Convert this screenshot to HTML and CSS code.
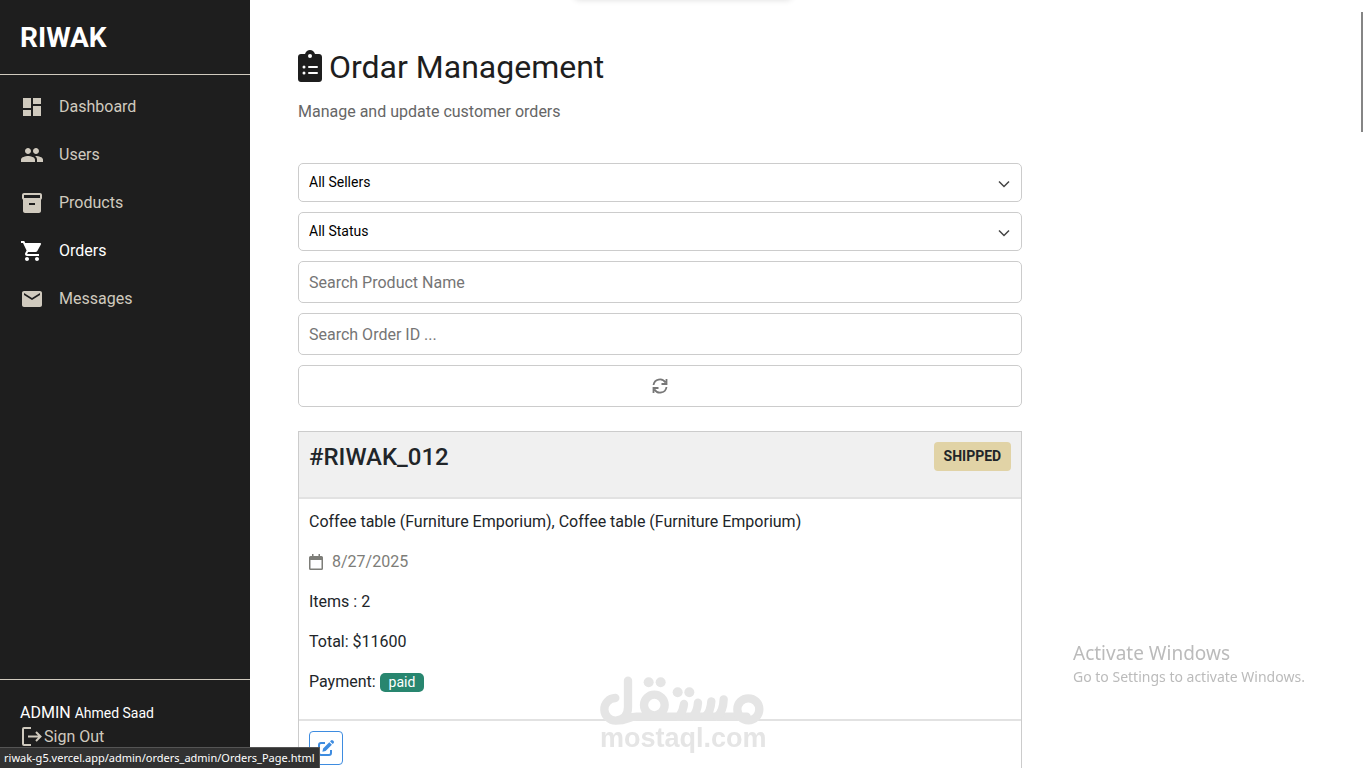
FILE: index.html
```html
<!DOCTYPE html>
<html lang="en">
<head>
<meta charset="utf-8">
<meta name="viewport" content="width=device-width, initial-scale=1">
<title>Riwak Admin</title>
<link rel="stylesheet" href="styles.css">
</head>
<body>
<div class="app">
  <aside class="sidebar">
    <div class="brand">RIWAK</div>
    <nav class="nav">
      <a class="nav-link" href="#dashboard"><svg class="nav-icon" viewBox="0 0 24 24"><path d="M3 13h8V3H3v10zm0 8h8v-6H3v6zm10 0h8V11h-8v10zm0-18v6h8V3h-8z"/></svg>Dashboard</a>
      <a class="nav-link" href="#users"><svg class="nav-icon" viewBox="0 0 24 24"><path d="M16 11c1.66 0 2.99-1.34 2.99-3S17.66 5 16 5s-3 1.34-3 3 1.34 3 3 3zm-8 0c1.66 0 2.99-1.34 2.99-3S9.66 5 8 5 5 6.340 5 8s1.340 3 3 3zm0 2c-2.330 0-7 1.170-7 3.500V19h14v-2.500c0-2.330-4.670-3.500-7-3.500zm8 0c-.29 0-.62.02-.97.05 1.160.840 1.970 1.970 1.970 3.450V19h6v-2.500c0-2.330-4.670-3.500-7-3.500z"/></svg>Users</a>
      <a class="nav-link" href="#products"><svg class="nav-icon" viewBox="0 0 24 24"><path d="M20 2H4c-1 0-2 .9-2 2v3.010c0 .72.43 1.340 1 1.690V20c0 1.100 1.100 2 2 2h14c.9 0 2-.9 2-2V8.700c.57-.35 1-.97 1-1.690V4c0-1.100-1-2-2-2zm-5 12H9v-2h6v2zm5-7H4V4h16v3z"/></svg>Products</a>
      <a class="nav-link active" href="#orders"><svg class="nav-icon" viewBox="0 0 24 24"><path d="M7 18c-1.100 0-1.990.9-1.990 2S5.900 22 7 22s2-.9 2-2-.9-2-2-2zM1 2v2h2l3.600 7.590-1.350 2.450c-.16.28-.25.61-.25.96 0 1.100.9 2 2 2h12v-2H7.420c-.14 0-.25-.11-.25-.25l.03-.12.9-1.630h7.450c.75 0 1.410-.41 1.750-1.030l3.580-6.490A1 1 0 0 0 20 4H5.210l-.94-2H1zm16 16c-1.100 0-1.990.9-1.990 2s.89 2 1.990 2 2-.9 2-2-.9-2-2-2z"/></svg>Orders</a>
      <a class="nav-link" href="#messages"><svg class="nav-icon" viewBox="0 0 24 24"><path d="M20 4H4c-1.100 0-1.990.9-1.990 2L2 18c0 1.100.9 2 2 2h16c1.100 0 2-.9 2-2V6c0-1.100-.9-2-2-2zm0 4l-8 5-8-5V6l8 5 8-5v2z"/></svg>Messages</a>
    </nav>
    <div class="account">
      <div class="account-name">ADMIN <small>Ahmed Saad</small></div>
      <a class="signout" href="#signout"><svg class="nav-icon line" viewBox="0 0 24 24"><path d="M11 3H4a1 1 0 0 0-1 1v15a1 1 0 0 0 1 1h7M8 11.500h12M16 7l4.500 4.500L16 16"/></svg>Sign Out</a>
    </div>
  </aside>

  <main class="main">
    <div class="content">
      <header class="page-head">
        <h1><svg class="title-icon" viewBox="0 0 384 512"><path fill-rule="evenodd" d="M336 64h-64c-14-38-44-64-80-64s-66 26-80 64H48C21 64 0 85 0 112v352c0 27 21 48 48 48h288c27 0 48-21 48-48V112c0-27-21-48-48-48zM192 64a32 32 0 1 1 0 64 32 32 0 0 1 0-64zM96 248a24 24 0 1 1 0 48 24 24 0 0 1 0-48zM96 344a24 24 0 1 1 0 48 24 24 0 0 1 0-48zM176 256h128q16 0 16 16t-16 16H176q-16 0-16-16t16-16zM176 352h128q16 0 16 16t-16 16H176q-16 0-16-16t16-16z"/></svg>Ordar Management</h1>
        <p>Manage and update customer orders</p>
      </header>

      <form class="filters">
        <div class="select-box">
          <select class="field" aria-label="Seller"><option>All Sellers</option></select>
          <svg class="chevron" viewBox="0 0 12 12"><path d="M1 3.500l5 5 5-5"/></svg>
        </div>
        <div class="select-box">
          <select class="field" aria-label="Status"><option>All Status</option></select>
          <svg class="chevron" viewBox="0 0 12 12"><path d="M1 3.500l5 5 5-5"/></svg>
        </div>
        <input class="field" type="text" aria-label="Product name" placeholder="Search Product Name">
        <input class="field" type="text" aria-label="Order ID" placeholder="Search Order ID ...">
        <button class="field refresh" type="button" aria-label="Refresh"><svg viewBox="0 0 16 16"><path d="M1.500 7A6.500 6.500 0 0 1 13.500 4.500M14.500 1v5h-5M14.500 9A6.500 6.500 0 0 1 2.500 11.500M1.500 15v-5h5"/></svg></button>
      </form>

      <article class="order">
        <header class="order-head">
          <h2>#RIWAK_012</h2>
          <span class="status">SHIPPED</span>
        </header>
        <div class="order-body">
          <p>Coffee table (Furniture Emporium), Coffee table (Furniture Emporium)</p>
          <p class="date"><svg viewBox="0 0 14 16"><path fill-rule="evenodd" d="M3 0h1.500v2h5V0H11v2h1.500A1.500 1.500 0 0 1 14 3.500v11a1.500 1.500 0 0 1-1.500 1.500h-11A1.500 1.500 0 0 1 0 14.500v-11A1.500 1.500 0 0 1 1.500 2H3zM1.500 6v8.500h11V6z"/></svg>8/27/2025</p>
          <p>Items : 2</p>
          <p>Total: $11600</p>
          <p>Payment: <span class="paid">paid</span></p>
        </div>
        <footer class="order-foot">
          <button class="edit" type="button" aria-label="Edit order"><svg viewBox="0 0 16 16"><path class="sheet" d="M7 3H3a2 2 0 0 0-2 2v8a2 2 0 0 0 2 2h8a2 2 0 0 0 2-2v-3"/><path d="M11.300 2.200l2.600 2.600-6.300 6.200-3.200.7.700-3.300zM12.100 1.400l.8-.8a1.500 1.500 0 0 1 2.100 0l.5.500a1.500 1.500 0 0 1 0 2.100l-.8.800z"/></svg></button>
        </footer>
      </article>
    </div>
  </main>
</div>

<div class="top-shadow"></div>
<div class="scroll-thumb"></div>
<div class="watermark">
  <svg viewBox="0 0 495 141"><g><path d="M46 66A34 34 0 0 0 48 134C74 132 84 114 84 94V14M48 134C84 134 84 122 110 122H440"/><circle cx="163" cy="87" r="31"/><circle cx="445" cy="100" r="33"/><path class="teeth" d="M252 84Q250 102 238 122M294 80Q292 108 278 122M334 76Q332 108 316 122M371 70Q370 104 352 122"/></g><g class="dots"><circle cx="146" cy="19" r="15"/><circle cx="182" cy="19" r="15"/><circle cx="233" cy="49" r="15"/><circle cx="268" cy="49" r="15"/></g></svg>
  <span>mostaql.com</span>
</div>
<div class="activate"><strong>Activate Windows</strong><span>Go to Settings to activate Windows.</span></div>
<div class="link-status">riwak-g5.vercel.app/admin/orders_admin/Orders_Page.html</div>
</body>
</html>
```
FILE: styles.css
```css
* { box-sizing: border-box; }
body {
  margin: 0;
  font: 16px/24px Roboto, sans-serif;
  color: #212529;
  background: #fff;
}
h1, h2, p { margin: 0; }
svg { flex: none; fill: currentColor; }

.app { display: flex; height: 100vh; }

.sidebar {
  display: flex;
  flex: 0 0 250px;
  flex-direction: column;
  color: #d0cabe;
  background: #1e1e1e;
}
.brand {
  padding: 21px 20px 20px;
  border-bottom: 1px solid #d0cabe;
  font-size: 28px;
  font-weight: 700;
  line-height: 33px;
  color: #fff;
}
.nav { flex: 1; padding: 8px 0; }
.nav-link {
  display: flex;
  align-items: center;
  gap: 15px;
  padding: 12px 20px;
  color: inherit;
  text-decoration: none;
}
.nav-link.active { color: #fff; }
.nav-icon { width: 24px; height: 24px; }
.nav-icon.line { fill: none; stroke: currentColor; stroke-width: 2; }
.account { padding: 21px 20px 19px; border-top: 1px solid #d0cabe; }
.account-name { color: #fff; }
.account-name small { font-size: 14px; }
.signout { display: flex; color: inherit; text-decoration: none; }

.main {
  flex: 1;
  min-width: 0;
  padding: 48px;
  overflow-y: auto;
  scrollbar-width: none;
}
.content { width: 71%; }
.page-head { padding-bottom: 39px; }
.page-head h1 {
  display: flex;
  align-items: flex-start;
  gap: 7px;
  margin-bottom: 14px;
  font-size: 32px;
  font-weight: 400;
  line-height: 38px;
  color: #1e1e1e;
}
.title-icon { width: 24px; height: 32px; margin-top: 2px; }
.page-head p { color: #666; }

.filters { display: grid; gap: 10px; margin-bottom: 24px; }
.field {
  width: 100%;
  height: 42px;
  padding: 0 10px;
  border: 1px solid #ccc;
  border-radius: 5px;
  font: inherit;
  color: #000;
  background: #fff;
}
.field::placeholder { color: #757575; }
.select-box { display: grid; align-items: center; }
.select-box > * { grid-area: 1 / 1; }
select.field { height: 39px; padding-bottom: 2px; appearance: none; font-size: 14px; }
.chevron {
  justify-self: end;
  width: 12px;
  height: 12px;
  margin: 2px 12px 0 0;
  fill: none;
  stroke: #444;
  stroke-width: 1.5;
  pointer-events: none;
}
.refresh { display: flex; align-items: center; justify-content: center; color: #777; }
.refresh svg { width: 16px; height: 16px; fill: none; stroke: currentColor; stroke-width: 1.8; }

.order { border: 1px solid #ccc; }
.order-head {
  display: flex;
  align-items: flex-start;
  justify-content: space-between;
  padding: 10px 10px 24px;
  border-bottom: 2px solid #e2e2e2;
  background: #f0f0f0;
}
.order-head h2 { font-size: 24px; font-weight: 500; line-height: 31px; }
.status {
  padding: 0 10px;
  border-radius: 4px;
  font-size: 14px;
  font-weight: 700;
  line-height: 29px;
  background: #e1d3a6;
}
.order-body { padding: 11px 10px 9px; }
.order-body p { margin-bottom: 16px; }
.order-body .date { display: flex; align-items: center; gap: 9px; color: #7d7d78; }
.date svg { width: 14px; height: 16px; }
.paid {
  display: inline-block;
  padding: 0 9px;
  border-radius: 5px;
  font-size: 14px;
  line-height: 19px;
  color: #fff;
  background: #28866f;
}
.order-foot { padding: 10px; border-top: 2px solid #e2e2e2; }
.edit {
  display: grid;
  place-items: center;
  width: 34px;
  height: 34px;
  padding: 0;
  border: 1px solid #3e8ce0;
  border-radius: 4px;
  color: #3e8ce0;
  background: #fff;
}
.edit svg { width: 16px; height: 16px; }
.edit .sheet { fill: none; stroke: currentColor; stroke-width: 2; }

.top-shadow {
  position: fixed;
  top: -10px;
  left: 574px;
  width: 218px;
  height: 10px;
  border-radius: 8px;
  box-shadow: 0 0 6px #ddd;
}
.scroll-thumb {
  position: fixed;
  top: 12px;
  right: 3px;
  width: 2px;
  height: 120px;
  background: #858585;
}
.watermark {
  position: fixed;
  bottom: 15px;
  left: 600px;
  font: 700 27px/30px "Liberation Sans", sans-serif;
  color: #e5e5e5;
}
.watermark svg { display: block; width: 165px; height: 47px; overflow: visible; fill: none; stroke: currentColor; stroke-width: 25; stroke-linecap: round; }
.watermark .dots { fill: currentColor; stroke: none; }
.activate {
  position: fixed;
  right: 57px;
  bottom: 81px;
  display: grid;
  width: 236px;
  font: 14px/21px "Noto Sans", sans-serif;
  white-space: nowrap;
  color: #bbb;
}
.activate strong { font-size: 19px; font-weight: 400; line-height: 25px; }
.link-status {
  position: fixed;
  bottom: 0;
  left: 0;
  padding: 0 4px;
  border: solid #555;
  border-width: 1px 1px 0 0;
  font: 11px/20px "Noto Sans", sans-serif;
  color: #fff;
  background: #323232;
}
```
